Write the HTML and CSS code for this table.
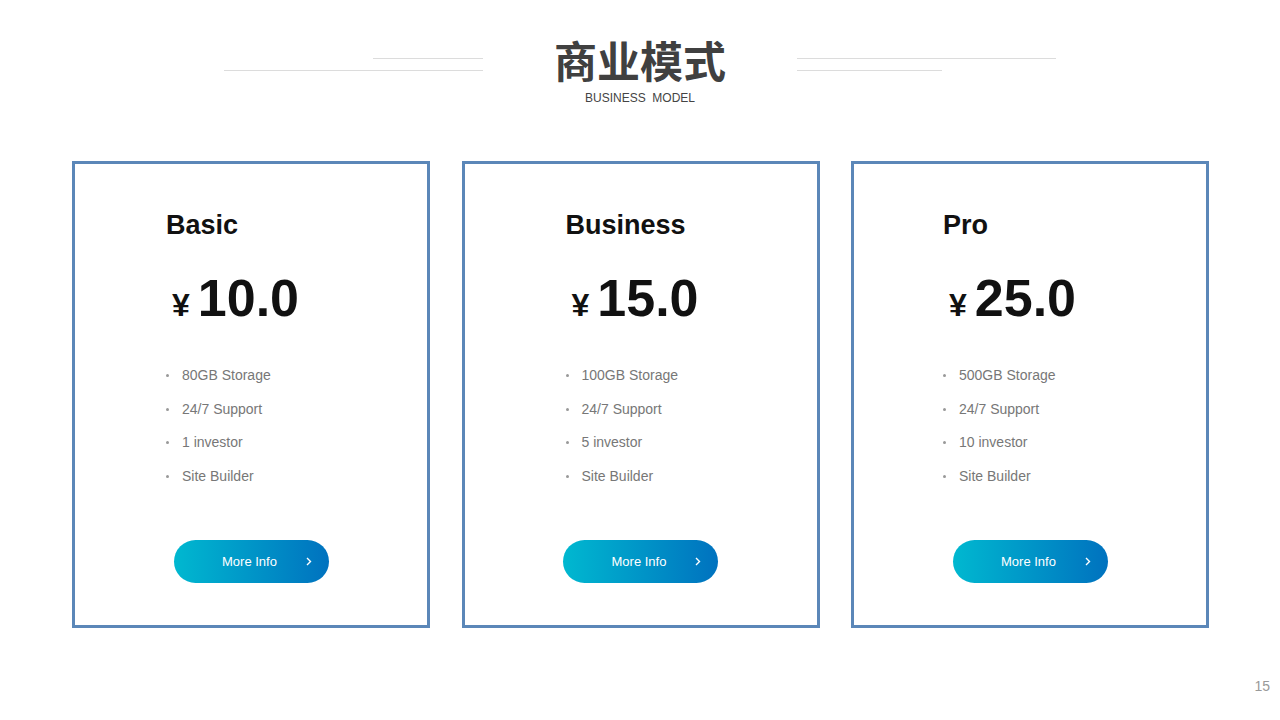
FILE: index.html
```html
<!DOCTYPE html>
<html lang="zh-CN">
<head>
    <meta charset="UTF-8">
    <title>商业模式</title>
    <link rel="stylesheet" href="styles.css">
</head>
<body>
    <header class="header">
        <div class="title-row">
            <div class="deco deco-left">
                <span class="line line-short"></span>
                <span class="line line-long"></span>
            </div>
            <h1 class="title">商业模式</h1>
            <div class="deco deco-right">
                <span class="line line-long"></span>
                <span class="line line-short"></span>
            </div>
        </div>
        <p class="subtitle">BUSINESS&nbsp; MODEL</p>
    </header>

    <main class="plans">
        <div class="card card-basic">
            <h2 class="plan-name">Basic</h2>
            <div class="price"><span class="currency">¥</span>10.0</div>
            <ul class="features">
                <li>80GB Storage</li>
                <li>24/7 Support</li>
                <li>1 investor</li>
                <li>Site Builder</li>
            </ul>
            <a href="#" class="more-btn">More Info
                <svg class="chevron" width="6" height="9" viewBox="0 0 6 9"><path d="M1 1 L4.5 4.5 L1 8" fill="none" stroke="#fff" stroke-width="1.4"/></svg>
            </a>
        </div>

        <div class="card card-business">
            <h2 class="plan-name">Business</h2>
            <div class="price"><span class="currency">¥</span>15.0</div>
            <ul class="features">
                <li>100GB Storage</li>
                <li>24/7 Support</li>
                <li>5 investor</li>
                <li>Site Builder</li>
            </ul>
            <a href="#" class="more-btn">More Info
                <svg class="chevron" width="6" height="9" viewBox="0 0 6 9"><path d="M1 1 L4.5 4.5 L1 8" fill="none" stroke="#fff" stroke-width="1.4"/></svg>
            </a>
        </div>

        <div class="card card-pro">
            <h2 class="plan-name">Pro</h2>
            <div class="price"><span class="currency">¥</span>25.0</div>
            <ul class="features">
                <li>500GB Storage</li>
                <li>24/7 Support</li>
                <li>10 investor</li>
                <li>Site Builder</li>
            </ul>
            <a href="#" class="more-btn">More Info
                <svg class="chevron" width="6" height="9" viewBox="0 0 6 9"><path d="M1 1 L4.5 4.5 L1 8" fill="none" stroke="#fff" stroke-width="1.4"/></svg>
            </a>
        </div>
    </main>

    <footer class="page-num">15</footer>
</body>
</html>
```

FILE: styles.css
```css
* {
    margin: 0;
    padding: 0;
    box-sizing: border-box;
    font-family: "Liberation Sans", Arial, sans-serif;
}

body {
    background-color: white;
    width: 1280px;
    height: 720px;
    overflow: hidden;
}

/* Header */
.header {
    padding-top: 38px;
}

.title-row {
    display: flex;
    justify-content: center;
    align-items: flex-start;
    gap: 71px;
}

.title {
    font-family: "Noto Sans CJK SC", sans-serif;
    font-size: 43px;
    line-height: 42px;
    font-weight: bold;
    color: #404040;
}

.deco {
    width: 259px;
    margin-top: 20px;
    display: flex;
    flex-direction: column;
    gap: 11px;
}

.deco-left {
    align-items: flex-end;
}

.deco-right {
    align-items: flex-start;
}

.line {
    display: block;
    height: 1px;
    background-color: #dcdcdc;
}

.line-long {
    width: 259px;
}

.deco-left .line-short {
    width: 110px;
}

.deco-right .line-short {
    width: 145px;
}

.subtitle {
    margin-top: 11px;
    text-align: center;
    font-size: 12px;
    line-height: 14px;
    color: #444;
}

/* Pricing cards */
.plans {
    display: flex;
    gap: 31.5px;
    padding-left: 72px;
    margin-top: 56px;
}

.card {
    width: 358px;
    height: 467px;
    border: 3px solid #5b87b8;
    padding-top: 48px;
    display: flex;
    flex-direction: column;
}

.card-basic {
    padding-left: 91px;
}

.card-business {
    padding-left: 101px;
}

.card-pro {
    padding-left: 89px;
}

.plan-name {
    font-size: 27px;
    line-height: 27px;
    font-weight: bold;
    color: #111;
}

.price {
    margin-top: 33px;
    font-size: 52px;
    line-height: 52px;
    font-weight: bold;
    color: #111;
    padding-left: 6px;
}

.currency {
    font-size: 32px;
    margin-right: 8px;
}

.features {
    list-style: none;
    margin-top: 28px;
    padding-left: 0;
}

.features li {
    font-size: 14px;
    line-height: 33.5px;
    color: #777;
    display: flex;
    align-items: center;
}

.features li::before {
    content: "";
    width: 3px;
    height: 3px;
    border-radius: 50%;
    background-color: #999;
    margin-right: 13px;
}

.more-btn {
    position: relative;
    align-self: center;
    margin-top: 47px;
    margin-left: -91px;
    width: 155px;
    height: 43px;
    border-radius: 22px;
    background: linear-gradient(to right, #00b8d0, #0072bf);
    color: white;
    text-decoration: none;
    font-size: 13px;
    display: flex;
    align-items: center;
    justify-content: center;
    padding-right: 3px;
}

.card-business .more-btn {
    margin-left: -101px;
}

.card-pro .more-btn {
    margin-left: -89px;
}

.chevron {
    position: absolute;
    right: 17px;
    top: 17px;
}

/* Page number */
.page-num {
    text-align: right;
    padding-right: 10px;
    margin-top: 50px;
    font-size: 14px;
    color: #999;
}
```
